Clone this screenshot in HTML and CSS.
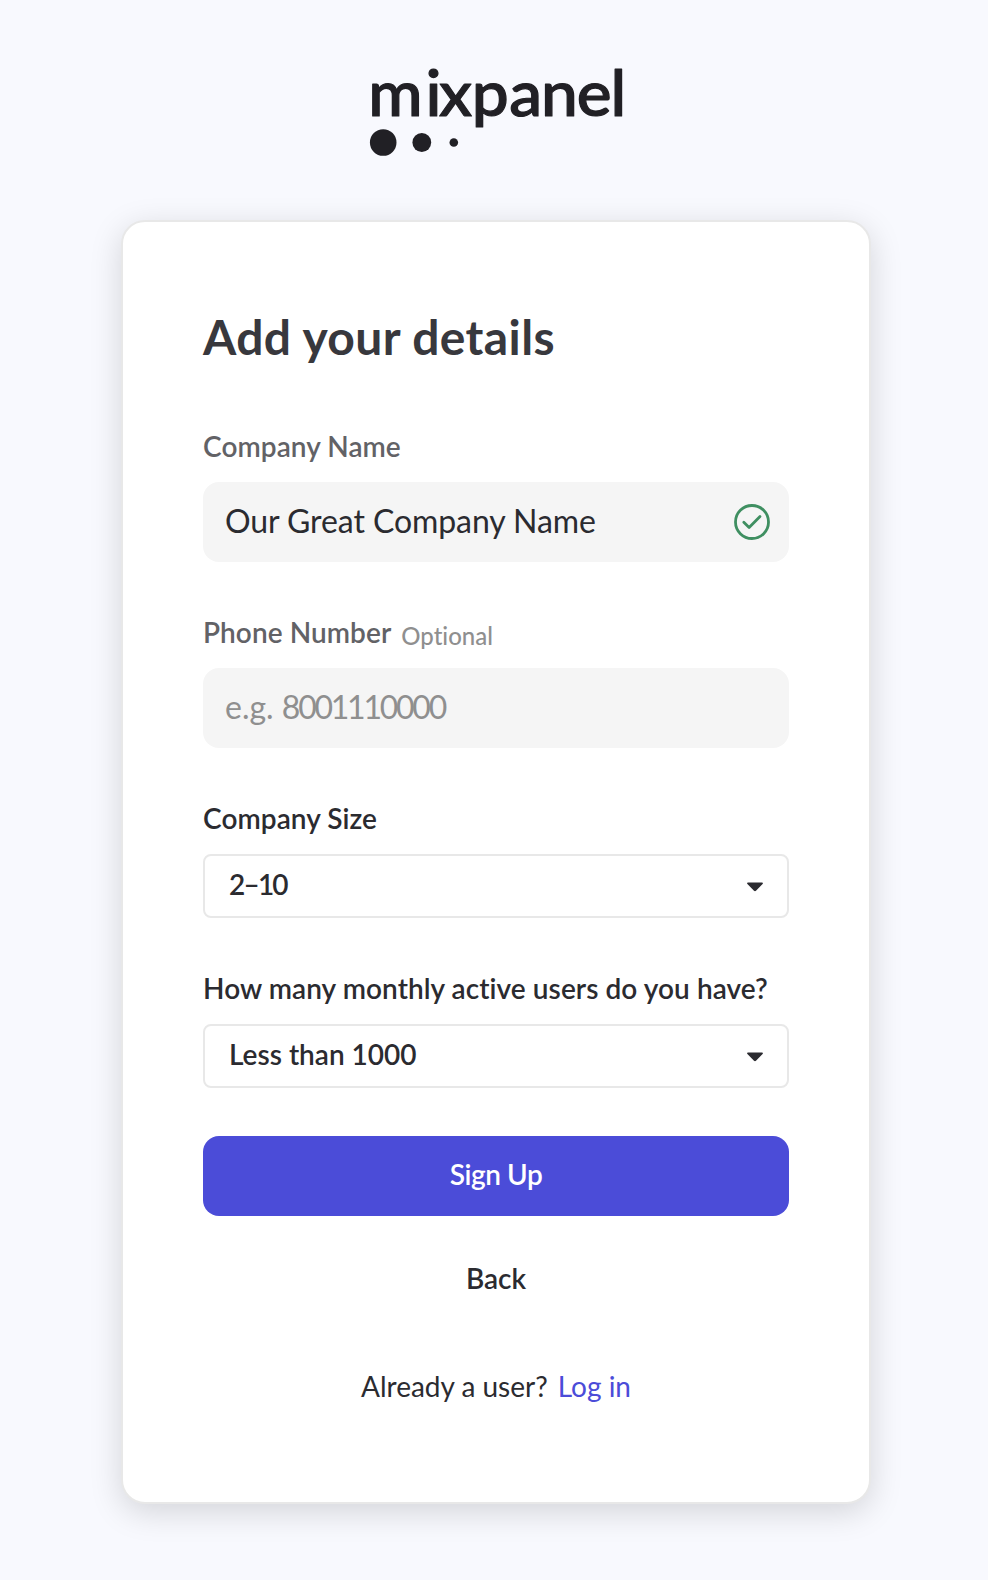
FILE: index.html
```html
<!DOCTYPE html>
<html lang="en">
<head>
<meta charset="utf-8">
<title>Mixpanel – Add your details</title>
<link rel="stylesheet" href="styles.css">
</head>
<body>
<main class="page">
  <svg class="logo" width="254" height="90" viewBox="0 0 254 90" role="img" aria-label="mixpanel">
    <text class="logo-word" x="-0.8" y="48.4" dx="0 3 -2.500 -.5 .5 -1 -1 -1" textLength="258" lengthAdjust="spacingAndGlyphs">mixpanel</text>
    <circle cx="14.2" cy="74.5" r="13.3"/>
    <circle cx="52.8" cy="74.5" r="9.4"/>
    <circle cx="84.8" cy="74.5" r="4.3"/>
  </svg>
  <section class="card">
    <h1 class="title">Add your details</h1>
    <form class="form">
      <div class="field">
        <div class="label label-muted">Company Name</div>
        <div class="input">
          <span>Our Great Company Name</span>
          <svg class="check" width="36" height="36" viewBox="0 0 36 36">
            <circle cx="18" cy="18" r="16.5"/>
            <path d="M9.8 18.2l5.3 5.3L26 12.4"/>
          </svg>
        </div>
      </div>
      <div class="field">
        <div class="label label-muted">Phone Number<span class="optional">Optional</span></div>
        <div class="input"><span class="placeholder">e.g. <span class="digits">8001110000</span></span></div>
      </div>
      <div class="field">
        <div class="label">Company Size</div>
        <div class="select">
          <span class="range">2–10</span>
          <svg class="caret" width="16" height="10" viewBox="0 0 16 10"><path d="M1 .4h14c.9 0 1.3 1 .6 1.6L9 8.8c-.6.6-1.4.6-2 0L.4 2C-.3 1.4 .1 .4 1 .4z"/></svg>
        </div>
      </div>
      <div class="field">
        <div class="label">How many monthly active users do you have?</div>
        <div class="select">
          <span>Less than 1000</span>
          <svg class="caret" width="16" height="10" viewBox="0 0 16 10"><path d="M1 .4h14c.9 0 1.3 1 .6 1.6L9 8.8c-.6.6-1.4.6-2 0L.4 2C-.3 1.4 .1 .4 1 .4z"/></svg>
        </div>
      </div>
    </form>
    <button class="submit" type="button">Sign Up</button>
    <button class="back" type="button">Back</button>
    <p class="login">Already a user?<a class="login-link">Log in</a></p>
  </section>
</main>
</body>
</html>
```
FILE: styles.css
```css
* {
  box-sizing: border-box;
}

body {
  margin: 0;
  height: 1580px;
  overflow: hidden;
  background: #f8f9fe;
  color: #2b2b30;
  font-family: Lato, "Open Sans", sans-serif;
  font-size: 28px;
  font-variant-ligatures: none;
  line-height: 36px;
}

.page {
  display: flex;
  flex-direction: column;
  align-items: center;
  padding: 68px 0 0 4px;
}

.logo {
  display: block;
  overflow: visible;
  margin-bottom: 62px;
  fill: #212025;
}

.logo-word {
  font-size: 64px;
  font-weight: 500;
  stroke: #212025;
  stroke-width: 1.2px;
  stroke-linejoin: round;
}

.card {
  display: flex;
  flex-direction: column;
  width: 750px;
  height: 1284px;
  padding: 85px 80px 0;
  border: 2px solid #e8e8e8;
  border-radius: 24px;
  background: #fff;
  box-shadow: 0 8px 32px rgba(0, 0, 0, 0.15);
}

.title {
  margin: 0 0 61px;
  color: #38383d;
  font-size: 48px;
  font-weight: 700;
  line-height: 60px;
  letter-spacing: 0.4px;
}

.form {
  display: flex;
  flex-direction: column;
  gap: 52px;
}

.label {
  display: flex;
  align-items: baseline;
  margin-bottom: 18px;
  height: 36px;
  font-weight: 600;
  letter-spacing: 0.07px;
}

.label-muted {
  color: #626266;
}

.optional {
  position: relative;
  top: 2px;
  margin-left: 10px;
  color: #8f8f8f;
  font-size: 24px;
  font-weight: 500;
  letter-spacing: 0;
}

.input {
  display: flex;
  align-items: center;
  justify-content: space-between;
  height: 80px;
  padding: 0 19px 2px 22px;
  border-radius: 16px;
  background: #f5f5f5;
  font-size: 32px;
  letter-spacing: -0.08px;
}

.placeholder {
  color: #8f8f8f;
  letter-spacing: 0;
}

.digits {
  letter-spacing: -2.25px;
}

.check {
  margin-top: 2px;
  fill: none;
  stroke: #3f8f61;
  stroke-width: 2.8px;
  stroke-linecap: round;
  stroke-linejoin: round;
}

.select {
  display: flex;
  align-items: center;
  justify-content: space-between;
  height: 64px;
  padding: 0 24px 4px;
  border: 2px solid #e8e8e8;
  border-radius: 8px;
  font-weight: 600;
}

.range {
  letter-spacing: -1.8px;
}

.caret {
  margin-top: 6px;
  fill: #2b2b30;
}

.submit,
.back {
  border: 0;
  font: inherit;
  font-weight: 600;
}

.submit {
  flex: none;
  height: 80px;
  margin-top: 48px;
  padding: 0 0 4px;
  border-radius: 16px;
  background: #4b4cd8;
  color: #fff;
  letter-spacing: -0.4px;
}

.back {
  height: 36px;
  margin: 44px auto 72px;
  padding: 0;
  background: none;
  color: #2b2b30;
}

.login {
  display: flex;
  justify-content: center;
  gap: 10px;
  margin: 0;
}

.login-link {
  color: #4b4cd8;
}
```
